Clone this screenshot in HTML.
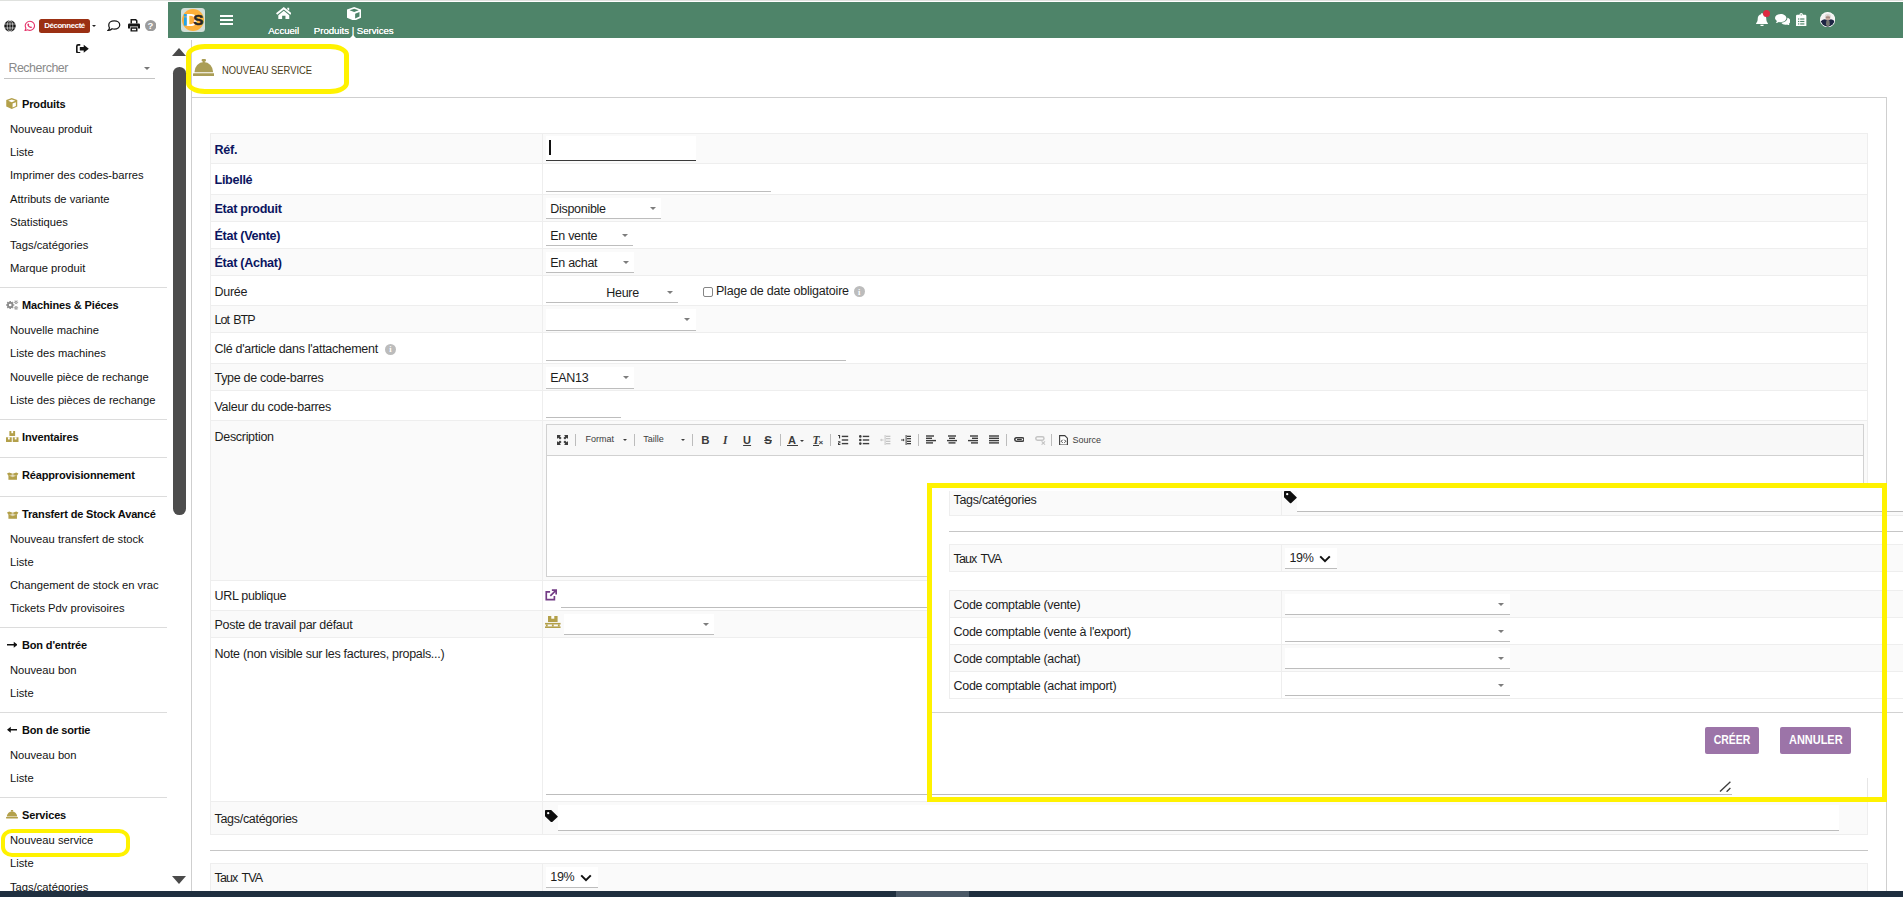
<!DOCTYPE html>
<html lang="fr"><head><meta charset="utf-8"><title>Nouveau service</title>
<style>
html,body{margin:0;padding:0;}
body{width:1903px;height:897px;overflow:hidden;background:#fff;position:relative;
 font-family:"Liberation Sans",sans-serif;color:#1b1b1b;}
div,span,svg{position:absolute;box-sizing:border-box;}
.t{white-space:nowrap;line-height:16px;height:16px;}
.s{font-size:11.2px;color:#121212;}
.sh{font-size:11px;font-weight:700;color:#0c0c0c;letter-spacing:-0.15px;}
.m{font-size:12.5px;color:#1d1d1d;letter-spacing:-0.3px;}
.mb{font-size:12.6px;font-weight:700;color:#0b1560;letter-spacing:-0.3px;}
.sep{left:0;width:167px;height:1px;background:#dcdcdc;}
.row{left:210px;width:1658px;border:1px solid #ececec;border-top:none;}
.g{background:#f8f8f8;}
.vs{left:542px;width:1px;background:#ececec;}
.ul{height:1px;background:#bdbdbd;}
.wb{background:#fff;}
.car{width:0;height:0;border-left:3px solid transparent;border-right:3px solid transparent;border-top:3px solid #6a6a6a;}
.btn{background:#9c74a8;border-radius:2px;color:#fff;font-weight:700;font-size:12.6px;line-height:26px;text-align:center;height:27px;}
.bt{position:relative;display:inline-block;}
</style></head>
<body>
<!-- left menu -->
<div id="side" style="left:0;top:0;width:168px;height:891px;overflow:hidden">
<svg style="left:3.5px;top:19.5px;" width="12" height="12" viewBox="0 0 24 24"><circle cx="12" cy="12" r="11.5" fill="#151515"/><g stroke="#fff" stroke-width="1.250" fill="none"><path d="M0 8H24M0 16H24M12 0V24"/><ellipse cx="12" cy="12" rx="5.6" ry="11.5"/></g></svg>
<svg style="left:24.3px;top:19.5px;" width="11.5" height="11.8" viewBox="0 0 24 24"><path fill="none" stroke="#e5346b" stroke-width="2.3" d="M12.4 2.2a9.6 9.6 0 1 1-4.9 17.9L2.2 21.8l1.8-5.1A9.6 9.6 0 0 1 12.4 2.2z"/><path fill="#e5346b" d="M8.4 7.2c.5-.5 1.1-.4 1.4.1l1 1.900c.2.4.1.8-.2 1.100l-.6.600c.7 1.400 1.700 2.400 3.100 3.100l.6-.6c.3-.3.700-.4 1.100-.2l1.900 1c.5.300.600.900.100 1.400-1.100 1.200-2.600 1.300-4.300.500-2.300-1.100-4-2.800-5.100-5.100-.8-1.700-.2-2.700 1-3.800z"/></svg>
<div style="left:39px;top:19px;width:51px;height:14px;background:#9b3013;border-radius:2.5px"></div>
<div class="t " style="left:39px;top:18.2px;width:51px;text-align:center;color:#fff;font-weight:700;font-size:7.9px;letter-spacing:-0.4px">Déconnecté</div>
<div style="left:92px;top:24.6px;width:0px;height:0px;border-left:2.3px solid transparent;border-right:2.3px solid transparent;border-top:2.3px solid #222"></div>
<svg style="left:107px;top:19.6px;" width="13.5" height="11.5" viewBox="0 0 27 23"><path fill="none" stroke="#1a1a1a" stroke-width="2.5" d="M14.500 1.800c6.200 0 11 3.700 11 8.200s-4.800 8.200-11 8.200c-1.500 0-3-.2-4.300-.7C8.300 19.300 5.600 20.600 2 21c1.700-1.700 2.700-3.400 3-5.200C3.800 14.100 3.500 12.100 3.500 10c0-4.500 4.800-8.200 11-8.200z"/></svg>
<svg style="left:128px;top:19.2px;" width="12" height="12.6" viewBox="0 0 24 25"><g fill="#161616"><path d="M5 0h11l3 3v6h-3V4.200l-1.200-1.200H8v6H5z"/><path d="M2.500 9h19A2.500 2.500 0 0 1 24 11.500V19h-4v-4H4v4H0v-7.500A2.500 2.500 0 0 1 2.500 9z"/><path d="M5 16.500h14V25H5zm3 2.800v2.900h8v-2.900z" fill-rule="evenodd"/></g></svg>
<svg style="left:144.6px;top:19.8px;" width="11.4" height="11.4" viewBox="0 0 24 24"><circle cx="12" cy="12" r="12" fill="#9b9b9b"/></svg>
<div class="t " style="left:144.6px;top:17.7px;width:11.4px;text-align:center;color:#fff;font-weight:700;font-size:9.5px">?</div>
<svg style="left:76px;top:43.8px;" width="12.8" height="9.6" viewBox="0 0 27 20"><g fill="#151515"><path d="M9 0H4.500A4.500 4.500 0 0 0 0 4.500v11A4.500 4.500 0 0 0 4.500 20H9v-3.400H5A1.600 1.600 0 0 1 3.400 15V5A1.600 1.600 0 0 1 5 3.400h4z"/><path d="M8 6.300h8.300V1.500L27 10l-10.700 8.500v-4.800H8z"/></g></svg>
<div class="t " style="left:8.4px;top:59.7px;font-size:12.4px;letter-spacing:-0.45px;color:#8a8a8a">Rechercher</div>
<div style="left:144px;top:67px;width:0px;height:0px;border-left:3px solid transparent;border-right:3px solid transparent;border-top:3px solid #777"></div>
<div style="left:4px;top:78px;width:151px;height:1px;background:#c4c4c4"></div>
<svg style="left:6.2px;top:98.3px;" width="11.5" height="11" viewBox="0 0 24 24"><path fill="#b3a04a" d="M12 0 L24 4.600 V18.800 L12 24 L0 18.800 V4.600 Z"/><path fill="#fff" d="M12 3 L19.800 6 L12 9.200 L4.200 6 Z"/><path fill="#fff" d="M13.800 12.200 L21 9.200 V17.200 L13.800 20.600 Z"/></svg>
<div class="t sh" style="left:22px;top:96px;">Produits</div>
<div class="t s" style="left:10px;top:121px;">Nouveau produit</div>
<div class="t s" style="left:10px;top:144px;">Liste</div>
<div class="t s" style="left:10px;top:167px;">Imprimer des codes-barres</div>
<div class="t s" style="left:10px;top:191px;">Attributs de variante</div>
<div class="t s" style="left:10px;top:214px;">Statistiques</div>
<div class="t s" style="left:10px;top:237px;">Tags/catégories</div>
<div class="t s" style="left:10px;top:260px;">Marque produit</div>
<div class="sep" style="left:0px;top:287px;width:167px;height:1px;"></div>
<svg style="left:6.3px;top:300.4px;overflow:visible" width="12.6" height="10" viewBox="0 0 12.600 10"><circle cx="4.2" cy="5.0" r="2.3" fill="none" stroke="#8c8c8c" stroke-width="1.9"/><path d="M7.25 5.00L8.25 5.00M6.36 7.16L7.06 7.86M4.20 8.05L4.20 9.05M2.04 7.16L1.34 7.86M1.15 5.00L0.15 5.00M2.04 2.84L1.34 2.14M4.20 1.95L4.20 0.95M6.36 2.84L7.06 2.14" stroke="#8c8c8c" stroke-width="1.5" fill="none"/><circle cx="10.1" cy="2.3" r="1.05" fill="none" stroke="#8c8c8c" stroke-width="1.0"/><path d="M11.45 2.30L12.15 2.30M10.78 3.47L11.12 4.08M9.43 3.47L9.07 4.08M8.75 2.30L8.05 2.30M9.42 1.13L9.07 0.52M10.78 1.13L11.12 0.52" stroke="#8c8c8c" stroke-width="0.9" fill="none"/><circle cx="10.1" cy="7.9" r="1.05" fill="none" stroke="#8c8c8c" stroke-width="1.0"/><path d="M11.45 7.90L12.15 7.90M10.78 9.07L11.12 9.68M9.43 9.07L9.07 9.68M8.75 7.90L8.05 7.90M9.42 6.73L9.07 6.12M10.78 6.73L11.12 6.12" stroke="#8c8c8c" stroke-width="0.9" fill="none"/></svg>
<div class="t sh" style="left:22px;top:297px;">Machines &amp; Piéces</div>
<div class="t s" style="left:10px;top:322px;">Nouvelle machine</div>
<div class="t s" style="left:10px;top:345px;">Liste des machines</div>
<div class="t s" style="left:10px;top:369px;">Nouvelle pièce de rechange</div>
<div class="t s" style="left:10px;top:392px;">Liste des pièces de rechange</div>
<div class="sep" style="left:0px;top:419px;width:167px;height:1px;"></div>
<svg style="left:6.2px;top:430.8px;" width="12.5" height="11.5" viewBox="0 0 24 22"><g fill="#b3a04a"><rect x="6.5" y="0" width="11" height="9.5"/><rect x="0" y="12" width="11" height="10"/><rect x="13" y="12" width="11" height="10"/></g><g fill="#fff"><rect x="10.3" y="0" width="3.4" height="4.2"/><rect x="3.8" y="12" width="3.4" height="4.2"/><rect x="16.8" y="12" width="3.4" height="4.2"/></g></svg>
<div class="t sh" style="left:22px;top:429px;">Inventaires</div>
<div class="sep" style="left:0px;top:457px;width:167px;height:1px;"></div>
<svg style="left:6.7px;top:471.7px;overflow:visible" width="11.4" height="8" preserveAspectRatio="none" viewBox="0 0 24 18"><g fill="#b3a04a"><path d="M3 7.5 H21 V17.5 H3 Z"/><path d="M0 3.2 L4.6 1 L12 4.2 L19.4 1 L24 3.2 L21 8.6 L12 5.4 L3 8.6 Z"/></g><path fill="#fff" d="M6 9.2 L12 7 L18 9.2 L12 11.6 Z" opacity=".55"/></svg>
<div class="t sh" style="left:22px;top:467px;">Réapprovisionnement</div>
<div class="sep" style="left:0px;top:496px;width:167px;height:1px;"></div>
<svg style="left:6.7px;top:510.7px;overflow:visible" width="11.4" height="8" preserveAspectRatio="none" viewBox="0 0 24 18"><g fill="#b3a04a"><path d="M3 7.5 H21 V17.5 H3 Z"/><path d="M0 3.2 L4.6 1 L12 4.2 L19.4 1 L24 3.2 L21 8.6 L12 5.4 L3 8.6 Z"/></g><path fill="#fff" d="M6 9.2 L12 7 L18 9.2 L12 11.6 Z" opacity=".55"/></svg>
<div class="t sh" style="left:22px;top:506px;">Transfert de Stock Avancé</div>
<div class="t s" style="left:10px;top:531px;">Nouveau transfert de stock</div>
<div class="t s" style="left:10px;top:554px;">Liste</div>
<div class="t s" style="left:10px;top:577px;">Changement de stock en vrac</div>
<div class="t s" style="left:10px;top:600px;">Tickets Pdv provisoires</div>
<div class="sep" style="left:0px;top:627px;width:167px;height:1px;"></div>
<svg style="left:6.6px;top:641.4px;" width="10.5" height="7.5" viewBox="0 0 14 10"><path fill="#111" d="M0 4 H9 V1 L14 5 L9 9 V6 H0 Z"/></svg>
<div class="t sh" style="left:22px;top:637px;">Bon d'entrée</div>
<div class="t s" style="left:10px;top:662px;">Nouveau bon</div>
<div class="t s" style="left:10px;top:685px;">Liste</div>
<div class="sep" style="left:0px;top:712px;width:167px;height:1px;"></div>
<svg style="left:6.6px;top:726.4px;" width="10.5" height="7.5" viewBox="0 0 14 10"><path fill="#111" d="M14 4 H5 V1 L0 5 L5 9 V6 H14 Z"/></svg>
<div class="t sh" style="left:22px;top:722px;">Bon de sortie</div>
<div class="t s" style="left:10px;top:747px;">Nouveau bon</div>
<div class="t s" style="left:10px;top:770px;">Liste</div>
<div class="sep" style="left:0px;top:797px;width:167px;height:1px;"></div>
<svg style="left:6px;top:810.2px;" width="12" height="8.5" preserveAspectRatio="none" viewBox="0 0 24 16"><g fill="#b3a04a"><rect x="0" y="13.2" width="24" height="2.8" rx=".8"/><path d="M1.6 12.4 A10.4 9.6 0 0 1 22.4 12.4 Z"/><rect x="9.6" y="0" width="4.8" height="2.4" rx="1"/><rect x="11" y="1.5" width="2" height="2.2"/></g></svg>
<div class="t sh" style="left:22px;top:807px;">Services</div>
<div class="t s" style="left:10px;top:832px;">Nouveau service</div>
<div class="t s" style="left:10px;top:855px;">Liste</div>
<div class="t s" style="left:10px;top:879px;">Tags/catégories</div>
<div style="left:1px;top:829px;width:128.8px;height:27.8px;border:4.8px solid #fff200;border-radius:11px/10px"></div>
</div>
<!-- top strip + green menu bar -->
<div style="left:0px;top:0px;width:1903px;height:1px;background:#dfe1de"></div>
<div style="left:168px;top:2px;width:1735px;height:36px;background:#4e8469"></div>
<div style="left:181px;top:8px;width:24px;height:24px;background:#d3dfd8;border-radius:3.5px"></div>
<div style="left:181.8px;top:8.8px;width:22.4px;height:22.4px;background:#fdb03a;border-radius:50%"></div>
<svg style="left:181px;top:8px;" width="24" height="24" viewBox="0 0 24 24"><rect x="2.900" y="6" width="2.900" height="2.500" fill="#1ea4ea"/><rect x="2.900" y="9.300" width="2.900" height="8.300" fill="#1ea4ea"/><text x="4.900" y="17.500" font-family="Liberation Sans, sans-serif" font-weight="700" font-size="16" fill="#fff">D</text><text x="12.200" y="17.450" font-family="Liberation Sans, sans-serif" font-weight="700" font-size="15.200" fill="#272727" stroke="#272727" stroke-width=".500">S</text></svg>
<div style="left:220.3px;top:15px;width:12.8px;height:2.1px;background:#fff"></div>
<div style="left:220.3px;top:19px;width:12.8px;height:2.1px;background:#fff"></div>
<div style="left:220.3px;top:23px;width:12.8px;height:2.1px;background:#fff"></div>
<svg style="left:275.6px;top:6.6px;" width="15.6" height="12.6" viewBox="0 0 31 25"><g fill="#fff"><path d="M15.500 0 L31 12.600 L28.600 15.600 L15.500 4.900 L2.400 15.600 L0 12.600 Z"/><path d="M15.500 7.300 L26.400 16.200 V25 H18.800 V17.600 H12.200 V25 H4.600 V16.200 Z"/><path d="M22.400 1.400 H26.200 V7.600 L22.400 4.500 Z"/></g></svg>
<div class="t " style="left:268.2px;top:23.4px;color:#fff;font-size:9.7px;letter-spacing:-0.05px;text-shadow:0 0 .6px #fff">Accueil</div>
<svg style="left:346.9px;top:6.6px;" width="14.4" height="13.8" preserveAspectRatio="none" viewBox="0 0 24 24"><path fill="#fff" d="M12 0 L24 4.400 V18.600 L12 24 L0 18.600 V4.400 Z"/><path fill="#4e8469" d="M12 3 L19.600 5.800 L12 8.800 L4.400 5.800 Z"/><path fill="#4e8469" d="M13.600 11.600 L20.800 8.800 V16.600 L13.600 20 Z"/></svg>
<div class="t " style="left:313.8px;top:23.4px;color:#fff;font-size:9.7px;letter-spacing:-0.04px;text-shadow:0 0 .6px #fff">Produits | Services</div>
<div style="left:350.3px;top:34.8px;width:0px;height:0px;border-left:3.4px solid transparent;border-right:3.4px solid transparent;border-bottom:3.4px solid #fff"></div>
<svg style="left:1756.4px;top:12.8px;" width="12" height="13.4" viewBox="0 0 24 27"><g fill="#fff"><path d="M12 0c1 0 1.800.8 1.800 1.800v.9c4 .8 6.800 4.200 6.800 8.300 0 4.800 1.200 7.200 3 9 .8.800.3 2.300-1 2.300H1.400c-1.300 0-1.800-1.500-1-2.300 1.800-1.800 3-4.200 3-9 0-4.100 2.800-7.500 6.800-8.300v-.9C10.200.8 11 0 12 0z"/><path d="M8.600 23.600h6.800a3.400 3.400 0 0 1-6.800 0z"/></g></svg>
<div style="left:1762.9px;top:9.8px;width:7.2px;height:7.2px;background:#df2a41;border-radius:50%"></div>
<svg style="left:1775px;top:14px;" width="15.4" height="11.4" viewBox="0 0 31 23"><g fill="#fff"><path d="M11.500 0C17.800 0 23 3.700 23 8.300s-5.200 8.300-11.500 8.300c-1.300 0-2.600-.2-3.800-.5-1.700 1.300-3.900 2-6.200 2 1.200-1.200 2-2.600 2.300-4.100C1.500 12.500 0 10.500 0 8.300 0 3.700 5.200 0 11.500 0z"/><path d="M25 8.800c3.500 1.200 6 3.700 6 6.700 0 2-1.200 3.800-3 5.100.3 1.300 1 2.400 2 3.400-2.100 0-4-.6-5.500-1.700-1.100.3-2.300.4-3.500.4-3.700 0-6.900-1.600-8.500-4 7-.2 12.500-4.400 12.500-9.900z" transform="translate(0,-1)"/></g></svg>
<svg style="left:1796.4px;top:12.6px;" width="10.4" height="13.8" viewBox="0 0 21 28"><g fill="#fff"><path d="M2.500 3.500H7a3.500 3.500 0 0 1 7 0h4.500A2.500 2.500 0 0 1 21 6v19.500a2.500 2.500 0 0 1-2.500 2.500h-16A2.500 2.500 0 0 1 0 25.500V6a2.500 2.500 0 0 1 2.500-2.500z"/></g><g fill="#4e8469"><circle cx="10.500" cy="3.700" r="1.300"/><rect x="4" y="11" width="2.600" height="2.400"/><rect x="8.400" y="11" width="8.600" height="2.400"/><rect x="4" y="16" width="2.600" height="2.400"/><rect x="8.400" y="16" width="8.600" height="2.400"/><rect x="4" y="21" width="2.600" height="2.400"/><rect x="8.400" y="21" width="8.600" height="2.400"/></g></svg>
<svg style="left:1819.9px;top:12px;" width="15.3" height="15.3" viewBox="0 0 32 32"><defs><clipPath id="av"><circle cx="16" cy="16" r="14.600"/></clipPath></defs><circle cx="16" cy="16" r="16" fill="#fff"/><g clip-path="url(#av)"><rect width="32" height="32" fill="#f4f3f3"/><ellipse cx="16.500" cy="9.500" rx="6.400" ry="5.600" fill="#dcdad8"/><ellipse cx="16.500" cy="12.800" rx="4.800" ry="5.400" fill="#c4a79c"/><rect x="12.300" y="10.200" width="8.400" height="1.500" fill="#6d5f5c" opacity=".7"/><path d="M0 32V22c3-4.500 7-6.200 10.500-6.600l6 3 6-3c3.500 .4 7.500 2.100 9.500 6.600v10z" fill="#1c2442"/><path d="M13.300 17.600h6.400l1 8.400-4.200 6-4.200-6z" fill="#74746f"/></g></svg>
<div style="left:191px;top:40px;width:1px;height:851px;background:#cfcfcf"></div>
<div style="left:191px;top:97px;width:1696px;height:1px;background:#cfcfcf"></div>
<div style="left:1886px;top:97px;width:1px;height:794px;background:#cfcfcf;border-radius:0"></div>
<svg style="left:192.7px;top:58.9px;" width="21.6" height="17.2" preserveAspectRatio="none" viewBox="0 0 24 16"><g fill="#aa9d55"><rect x="0" y="13.2" width="24" height="2.8" rx=".8"/><path d="M1.6 12.4 A10.4 9.6 0 0 1 22.4 12.4 Z"/><rect x="9.6" y="0" width="4.8" height="2.4" rx="1"/><rect x="11" y="1.5" width="2" height="2.2"/></g></svg>
<div class="t " style="left:221.6px;top:61.900000000000006px;font-size:11.6px;color:#4a3d17;transform:scaleX(.81);transform-origin:0 50%">NOUVEAU SERVICE</div>
<div style="left:186.4px;top:43.8px;width:163px;height:50.2px;border:5px solid #fff200;border-radius:19px/11px"></div>
<div style="left:171.9px;top:47.8px;width:0px;height:0px;border-left:7.6px solid transparent;border-right:7.6px solid transparent;border-bottom:8px solid #4a4a4a"></div>
<div style="left:173.2px;top:66.8px;width:12.7px;height:448.2px;background:#4d4d4d;border-radius:6.350px"></div>
<div style="left:172px;top:876.2px;width:0px;height:0px;border-left:7.600px solid transparent;border-right:7.600px solid transparent;border-top:8px solid #4a4a4a"></div>
<div style="left:0px;top:891px;width:1903px;height:6px;background:#1f2f3f;z-index:9"></div>
<div style="left:896px;top:891px;width:73px;height:6px;background:#4a5866;z-index:9"></div>
<!-- main form -->
<div style="left:210px;top:133px;width:1658px;height:31px;background:#fafafa;border:1px solid #eeeeee"></div>
<div style="left:542px;top:133px;width:1px;height:31px;background:#eeeeee"></div>
<div style="left:210px;top:163px;width:1658px;height:32px;background:#fff;border:1px solid #eeeeee"></div>
<div style="left:542px;top:163px;width:1px;height:32px;background:#eeeeee"></div>
<div style="left:210px;top:194px;width:1658px;height:28px;background:#fafafa;border:1px solid #eeeeee"></div>
<div style="left:542px;top:194px;width:1px;height:28px;background:#eeeeee"></div>
<div style="left:210px;top:221px;width:1658px;height:28px;background:#fff;border:1px solid #eeeeee"></div>
<div style="left:542px;top:221px;width:1px;height:28px;background:#eeeeee"></div>
<div style="left:210px;top:248px;width:1658px;height:28px;background:#fafafa;border:1px solid #eeeeee"></div>
<div style="left:542px;top:248px;width:1px;height:28px;background:#eeeeee"></div>
<div style="left:210px;top:275px;width:1658px;height:31px;background:#fff;border:1px solid #eeeeee"></div>
<div style="left:542px;top:275px;width:1px;height:31px;background:#eeeeee"></div>
<div style="left:210px;top:305px;width:1658px;height:28px;background:#fafafa;border:1px solid #eeeeee"></div>
<div style="left:542px;top:305px;width:1px;height:28px;background:#eeeeee"></div>
<div style="left:210px;top:332px;width:1658px;height:32px;background:#fff;border:1px solid #eeeeee"></div>
<div style="left:542px;top:332px;width:1px;height:32px;background:#eeeeee"></div>
<div style="left:210px;top:363px;width:1658px;height:28px;background:#fafafa;border:1px solid #eeeeee"></div>
<div style="left:542px;top:363px;width:1px;height:28px;background:#eeeeee"></div>
<div style="left:210px;top:390px;width:1658px;height:31px;background:#fff;border:1px solid #eeeeee"></div>
<div style="left:542px;top:390px;width:1px;height:31px;background:#eeeeee"></div>
<div style="left:210px;top:420px;width:1658px;height:161px;background:#fafafa;border:1px solid #eeeeee"></div>
<div style="left:542px;top:420px;width:1px;height:161px;background:#eeeeee"></div>
<div style="left:210px;top:580px;width:1658px;height:31px;background:#fff;border:1px solid #eeeeee"></div>
<div style="left:542px;top:580px;width:1px;height:31px;background:#eeeeee"></div>
<div style="left:210px;top:610px;width:1658px;height:28px;background:#fafafa;border:1px solid #eeeeee"></div>
<div style="left:542px;top:610px;width:1px;height:28px;background:#eeeeee"></div>
<div style="left:210px;top:637px;width:1658px;height:165px;background:#fff;border:1px solid #eeeeee"></div>
<div style="left:542px;top:637px;width:1px;height:165px;background:#eeeeee"></div>
<div style="left:210px;top:801px;width:1658px;height:34px;background:#fafafa;border:1px solid #eeeeee"></div>
<div style="left:542px;top:801px;width:1px;height:34px;background:#eeeeee"></div>
<div style="left:210px;top:850px;width:1658px;height:1px;background:#c6c6c6"></div>
<div style="left:210px;top:863px;width:1658px;height:33px;background:#fafafa;border:1px solid #eeeeee"></div>
<div style="left:542px;top:863px;width:1px;height:33px;background:#eeeeee"></div>
<div class="t mb" style="left:214.5px;top:141.7px;">Réf.</div>
<div class="t mb" style="left:214.5px;top:171.7px;">Libellé</div>
<div class="t mb" style="left:214.5px;top:201px;">Etat produit</div>
<div class="t mb" style="left:214.5px;top:228px;">État (Vente)</div>
<div class="t mb" style="left:214.5px;top:255px;">État (Achat)</div>
<div class="t m" style="left:214.5px;top:284.3px;">Durée</div>
<div class="t m" style="left:214.5px;top:312.3px;letter-spacing:-0.95px;word-spacing:1.600px">Lot BTP</div>
<div class="t m" style="left:214.5px;top:341.1px;">Clé d'article dans l'attachement</div>
<div class="t m" style="left:214.5px;top:370.3px;">Type de code-barres</div>
<div class="t m" style="left:214.5px;top:399.3px;">Valeur du code-barres</div>
<div class="t m" style="left:214.5px;top:429.3px;">Description</div>
<div class="t m" style="left:214.5px;top:588.3px;">URL publique</div>
<div class="t m" style="left:214.5px;top:617.3px;">Poste de travail par défaut</div>
<div class="t m" style="left:214.5px;top:646.3px;">Note (non visible sur les factures, propals...)</div>
<div class="t m" style="left:214.5px;top:811.3px;">Tags/catégories</div>
<div class="t m" style="left:214.5px;top:870.3px;letter-spacing:-0.85px;word-spacing:1.600px">Taux TVA</div>
<div style="left:546px;top:136px;width:150px;height:24px;background:#fff"></div>
<div style="left:546px;top:160px;width:150px;height:1px;background:#3a3a3a"></div>
<div style="left:549px;top:140px;width:1.6px;height:15px;background:#111"></div>
<div class="ul" style="left:546px;top:191px;width:225px;height:1px;"></div>
<div style="left:546px;top:198px;width:115px;height:20px;background:#fff"></div>
<div style="left:546px;top:218px;width:115px;height:1px;background:#bdbdbd"></div>
<div class="t m" style="left:550.3px;top:201.20000000000002px;">Disponible</div>
<div style="left:650px;top:206.9px;width:0px;height:0px;border-left:3px solid transparent;border-right:3px solid transparent;border-top:3px solid #7d7d7d"></div>
<div style="left:546px;top:225px;width:87px;height:20px;background:#fff"></div>
<div style="left:546px;top:245px;width:87px;height:1px;background:#bdbdbd"></div>
<div class="t m" style="left:550.3px;top:228.20000000000002px;">En vente</div>
<div style="left:622px;top:233.9px;width:0px;height:0px;border-left:3px solid transparent;border-right:3px solid transparent;border-top:3px solid #7d7d7d"></div>
<div style="left:546px;top:252px;width:88px;height:20px;background:#fff"></div>
<div style="left:546px;top:272px;width:88px;height:1px;background:#bdbdbd"></div>
<div class="t m" style="left:550.3px;top:255.2px;">En achat</div>
<div style="left:623px;top:260.9px;width:0px;height:0px;border-left:3px solid transparent;border-right:3px solid transparent;border-top:3px solid #7d7d7d"></div>
<div class="ul" style="left:546px;top:302px;width:132px;height:1px;"></div>
<div class="t m" style="left:606.3px;top:285.2px;">Heure</div>
<div style="left:666.8px;top:291.4px;width:0px;height:0px;border-left:3px solid transparent;border-right:3px solid transparent;border-top:3px solid #7d7d7d"></div>
<div style="left:703.3px;top:287.2px;width:9.6px;height:9.6px;background:#fff;border:1px solid #858585;border-radius:2px"></div>
<div class="t m" style="left:716px;top:283.0px;letter-spacing:-0.22px">Plage de date obligatoire</div>
<div style="left:853.8px;top:286.1px;width:11px;height:11px;background:#bcbcbc;border-radius:50%"></div>
<div class="t " style="left:853.8px;top:283.8px;width:11px;text-align:center;color:#fff;font-weight:700;font-size:8.5px;font-family:'Liberation Serif',serif">i</div>
<div style="left:546px;top:309px;width:150px;height:20.5px;background:#fff"></div>
<div style="left:546px;top:329.5px;width:150px;height:1px;background:#bdbdbd"></div>
<div style="left:684px;top:317.9px;width:0px;height:0px;border-left:3px solid transparent;border-right:3px solid transparent;border-top:3px solid #7d7d7d"></div>
<div style="left:385.0px;top:343.7px;width:11px;height:11px;background:#bcbcbc;border-radius:50%"></div>
<div class="t " style="left:385.0px;top:341.4px;width:11px;text-align:center;color:#fff;font-weight:700;font-size:8.5px;font-family:'Liberation Serif',serif">i</div>
<div class="ul" style="left:546px;top:360px;width:300px;height:1px;"></div>
<div style="left:546px;top:367px;width:88px;height:20.5px;background:#fff"></div>
<div style="left:546px;top:387.5px;width:88px;height:1px;background:#bdbdbd"></div>
<div class="t m" style="left:550.3px;top:370.2px;">EAN13</div>
<div style="left:623px;top:375.9px;width:0px;height:0px;border-left:3px solid transparent;border-right:3px solid transparent;border-top:3px solid #7d7d7d"></div>
<div class="ul" style="left:546px;top:417px;width:75px;height:1px;"></div>
<div style="left:546px;top:424px;width:1318px;height:153px;background:#fff;border:1px solid #d1d1d1"></div>
<div style="left:547px;top:425px;width:1316px;height:30px;background:#f8f8f8;border-bottom:1px solid #d1d1d1;height:31px"></div>
<svg style="left:557.4px;top:435px;" width="11" height="10" viewBox="0 0 11 10"><g fill="#3c3c3c"><path d="M0 0H4L2.800 1.200 4.600 3 3 4.600 1.200 2.800 0 4Z"/><path d="M11 0V4L9.800 2.800 8 4.600 6.400 3 8.200 1.200 7 0Z"/><path d="M0 10V6L1.200 7.200 3 5.400 4.600 7 2.800 8.800 4 10Z"/><path d="M11 10H7L8.200 8.800 6.400 7 8 5.400 9.800 7.200 11 6Z"/></g></svg>
<div style="left:574.9px;top:433.5px;width:1px;height:12.5px;background:#bcbcbc"></div>
<div class="t " style="left:585.4px;top:431.3px;font-size:9px;color:#3c3c3c">Format</div>
<div style="left:622.6px;top:439.3px;width:0px;height:0px;border-left:2.2px solid transparent;border-right:2.2px solid transparent;border-top:2.2px solid #3c3c3c"></div>
<div style="left:634.0px;top:433.5px;width:1px;height:12.5px;background:#bcbcbc"></div>
<div class="t " style="left:643.2px;top:431.3px;font-size:9px;color:#3c3c3c">Taille</div>
<div style="left:680.5px;top:439.3px;width:0px;height:0px;border-left:2.2px solid transparent;border-right:2.2px solid transparent;border-top:2.2px solid #3c3c3c"></div>
<div style="left:691.9px;top:433.5px;width:1px;height:12.5px;background:#bcbcbc"></div>
<div class="t " style="left:700.3px;top:432.3px;width:10px;text-align:center;font-size:11.5px;font-weight:700;color:#3c3c3c">B</div>
<div class="t " style="left:720.3px;top:432.3px;width:10px;text-align:center;font-size:11.5px;font-weight:700;font-style:italic;font-family:'Liberation Serif',serif;color:#3c3c3c">I</div>
<div class="t " style="left:742.1px;top:432.3px;width:10px;text-align:center;font-size:11px;font-weight:700;color:#3c3c3c;text-decoration:underline">U</div>
<div class="t " style="left:763px;top:432.3px;width:10px;text-align:center;font-size:11.5px;font-weight:700;color:#3c3c3c;text-decoration:line-through">S</div>
<div style="left:780.0px;top:433.5px;width:1px;height:12.5px;background:#bcbcbc"></div>
<div class="t " style="left:787px;top:431.6px;width:10px;text-align:center;font-size:11px;font-weight:700;color:#3c3c3c">A</div>
<div style="left:787px;top:445.2px;width:10.6px;height:1.3px;background:#3c3c3c"></div>
<div style="left:800px;top:439.6px;width:0px;height:0px;border-left:2px solid transparent;border-right:2px solid transparent;border-top:2px solid #3c3c3c"></div>
<div class="t " style="left:812.6px;top:431.8px;font-size:11.5px;font-weight:700;font-style:italic;font-family:'Liberation Serif',serif;color:#3c3c3c">T</div>
<div class="t " style="left:818.4px;top:435px;font-size:8px;font-weight:700;color:#3c3c3c">×</div>
<div style="left:812.8px;top:445.4px;width:6px;height:1px;background:#3c3c3c"></div>
<div style="left:829.9px;top:433.5px;width:1px;height:12.5px;background:#bcbcbc"></div>
<svg style="left:838.2px;top:435px;" width="10.4" height="10" viewBox="0 0 10.400 10"><g fill="#3c3c3c"><rect x="3.800" y=".700" width="6.400" height="1.400"/><rect x="3.800" y="4.300" width="6.400" height="1.400"/><rect x="3.800" y="7.900" width="6.400" height="1.400"/><rect x="1" y="0" width="1.100" height="3.400"/><rect x="0" y="0" width="2" height=".900"/><path d="M0 6.200H2.400V8.200H1V9H2.400V10H0V7.600H1.400V7.100H0Z"/></g></svg>
<svg style="left:859.2px;top:435px;" width="10.4" height="10" viewBox="0 0 10.400 10"><g fill="#3c3c3c"><rect x="3.800" y=".700" width="6.400" height="1.400"/><rect x="3.800" y="4.300" width="6.400" height="1.400"/><rect x="3.800" y="7.900" width="6.400" height="1.400"/><circle cx="1.300" cy="1.400" r="1.300"/><circle cx="1.300" cy="8.600" r="1.300"/><circle cx="1.300" cy="5" r="1.300"/></g></svg>
<svg style="left:880.2px;top:435px;" width="10.4" height="10" viewBox="0 0 10.400 10"><g fill="#c4c4c4"><rect x="4.600" y="0" width="1" height="10"/><rect x="6" y=".700" width="4.400" height="1.300"/><rect x="6" y="3" width="4.400" height="1.300"/><rect x="6" y="5.700" width="4.400" height="1.300"/><rect x="6" y="8" width="4.400" height="1.300"/><path d="M3.600 4.400H1.600V3.400L0 5 1.600 6.600V5.600H3.600Z"/></g></svg>
<svg style="left:901px;top:435px;" width="10.4" height="10" viewBox="0 0 10.400 10"><g fill="#3c3c3c"><rect x="4.600" y="0" width="1" height="10"/><rect x="6" y=".700" width="4.400" height="1.300"/><rect x="6" y="3" width="4.400" height="1.300"/><rect x="6" y="5.700" width="4.400" height="1.300"/><rect x="6" y="8" width="4.400" height="1.300"/><path d="M0 4.400H2V3.400L3.600 5 2 6.600V5.600H0Z"/></g></svg>
<div style="left:917.9px;top:433.5px;width:1px;height:12.5px;background:#bcbcbc"></div>
<svg style="left:926px;top:435.2px;" width="10" height="9.6" viewBox="0 0 10 9.600"><g fill="#3c3c3c"><rect x="0" y="0.3" width="8" height="1.400"/><rect x="0" y="2.5999999999999996" width="6" height="1.400"/><rect x="0" y="4.8999999999999995" width="10" height="1.400"/><rect x="0" y="7.199999999999999" width="7" height="1.400"/></g></svg>
<svg style="left:947px;top:435.2px;" width="10" height="9.6" viewBox="0 0 10 9.600"><g fill="#3c3c3c"><rect x="1.0" y="0.3" width="8" height="1.400"/><rect x="2.0" y="2.5999999999999996" width="6" height="1.400"/><rect x="0.0" y="4.8999999999999995" width="10" height="1.400"/><rect x="1.5" y="7.199999999999999" width="7" height="1.400"/></g></svg>
<svg style="left:968px;top:435.2px;" width="10" height="9.6" viewBox="0 0 10 9.600"><g fill="#3c3c3c"><rect x="2" y="0.3" width="8" height="1.400"/><rect x="4" y="2.5999999999999996" width="6" height="1.400"/><rect x="0" y="4.8999999999999995" width="10" height="1.400"/><rect x="3" y="7.199999999999999" width="7" height="1.400"/></g></svg>
<svg style="left:989px;top:435.2px;" width="10" height="9.6" viewBox="0 0 10 9.600"><g fill="#3c3c3c"><rect x="0" y="0.3" width="10" height="1.400"/><rect x="0" y="2.5999999999999996" width="10" height="1.400"/><rect x="0" y="4.8999999999999995" width="10" height="1.400"/><rect x="0" y="7.199999999999999" width="10" height="1.400"/></g></svg>
<div style="left:1006.0px;top:433.5px;width:1px;height:12.5px;background:#bcbcbc"></div>
<svg style="left:1013.6px;top:437.2px;" width="10.8" height="5" viewBox="0 0 10.800 5"><rect x=".800" y=".800" width="9.200" height="3.400" rx="1.700" fill="none" stroke="#3c3c3c" stroke-width="1.600"/><rect x="3" y="1.900" width="4.800" height="1.200" fill="#3c3c3c"/></svg>
<svg style="left:1035px;top:436.4px;" width="10.8" height="9" viewBox="0 0 10.800 9"><rect x=".800" y=".800" width="8.200" height="3.400" rx="1.700" fill="none" stroke="#c4c4c4" stroke-width="1.500"/><path d="M6.600 5.400L10 8.600M10 5.400L6.600 8.600" stroke="#c4c4c4" stroke-width="1.200"/></svg>
<div style="left:1050.8px;top:433.5px;width:1px;height:12.5px;background:#bcbcbc"></div>
<svg style="left:1059px;top:434.8px;" width="9" height="10.6" viewBox="0 0 9 10.600"><path d="M.600 .600H5.800L8.400 3.200V10H.600Z" fill="#fff" stroke="#3c3c3c" stroke-width="1.100"/><path d="M3.600 4.800L2.200 6.300 3.600 7.800M5.400 4.800L6.800 6.300 5.400 7.800" fill="none" stroke="#3c3c3c" stroke-width="1"/></svg>
<div class="t " style="left:1072.6px;top:431.8px;font-size:9px;color:#3c3c3c">Source</div>
<svg style="left:545.2px;top:589.2px;" width="12.2" height="12.2" viewBox="0 0 24 24"><g fill="none" stroke="#733c85" stroke-width="3.300"><path d="M18.500 14v7H2.500V5.500H10"/><path d="M13.500 2.200H22V10.700M21.500 2.700L10.500 13.700"/></g></svg>
<div class="ul" style="left:561px;top:607px;width:1279px;height:1px;"></div>
<svg style="left:545px;top:616.4px;" width="15.6" height="12" viewBox="0 0 26 20"><g fill="#b3a04a"><rect x="5" y="0" width="16" height="10"/><rect x="0" y="11.500" width="26" height="2.600"/><rect x="0" y="17.400" width="26" height="2.600"/><rect x="1.500" y="14" width="3" height="3.500"/><rect x="11.500" y="14" width="3" height="3.500"/><rect x="21.500" y="14" width="3" height="3.500"/></g><rect x="10.500" y="0" width="5" height="4.500" fill="#fff"/></svg>
<div style="left:564px;top:614px;width:150px;height:20px;background:#fff"></div>
<div style="left:564px;top:634px;width:150px;height:1px;background:#bdbdbd"></div>
<div style="left:703px;top:623.2px;width:0px;height:0px;border-left:3px solid transparent;border-right:3px solid transparent;border-top:3px solid #7d7d7d"></div>
<div class="ul" style="left:546px;top:794px;width:1186px;height:1px;"></div>
<svg style="left:545.1px;top:810px;" width="12.8" height="12.4" viewBox="0 0 12.800 12.400"><path fill="#0d0d0d" d="M.800 0H6.200L12.600 6.300a.600 .600 0 0 1 0 .800L7 12.200a.600 .600 0 0 1-.800 0L0 6.200V.800A.800 .800 0 0 1 .800 0z"/><circle cx="3.200" cy="3.200" r="1.150" fill="#fff"/></svg>
<div style="left:558px;top:805px;width:1281px;height:25px;background:#fff"></div>
<div class="ul" style="left:558px;top:830px;width:1281px;height:1px;"></div>
<div style="left:546px;top:867px;width:52px;height:20px;background:#fff"></div>
<div class="ul" style="left:546px;top:887px;width:52px;height:1px;"></div>
<div class="t m" style="left:550.3px;top:869px;">19%</div>
<svg style="left:580.4px;top:873.8px;" width="12" height="8" viewBox="0 0 12 8"><path d="M1.200 1.400 L6 6.200 L10.800 1.400" fill="none" stroke="#111" stroke-width="2"/></svg>
<!-- pasted zoom panel with yellow frame -->
<div id="inset" style="left:927px;top:483px;width:976px;height:318.6px;background:#fff;overflow:hidden">
<div style="left:22px;top:-3px;width:960px;height:36px;background:#fafafa;border:1px solid #eeeeee"></div>
<div style="left:354px;top:-3px;width:1px;height:36px;background:#eeeeee"></div>
<div style="left:0px;top:0px;width:976px;height:7.6px;background:#fff"></div>
<div style="left:936px;top:0px;width:1px;height:7.6px;background:#d1d1d1"></div>
<div style="left:937px;top:0px;width:3px;height:7.6px;background:#fafafa"></div>
<div style="left:940px;top:0px;width:1px;height:7.6px;background:#e4e4e4"></div>
<div class="t m" style="left:26.5px;top:9.300000000000011px;">Tags/catégories</div>
<svg style="left:357.1px;top:8.2px;" width="12.8" height="12.4" viewBox="0 0 12.800 12.400"><path fill="#0d0d0d" d="M.800 0H6.200L12.600 6.300a.600 .600 0 0 1 0 .800L7 12.200a.600 .600 0 0 1-.800 0L0 6.200V.800A.800 .800 0 0 1 .800 0z"/><circle cx="3.200" cy="3.200" r="1.150" fill="#fff"/></svg>
<div style="left:370px;top:3px;width:700px;height:25px;background:#fff"></div>
<div class="ul" style="left:370px;top:28px;width:700px;height:1px;"></div>
<div style="left:22px;top:48px;width:960px;height:1px;background:#c6c6c6"></div>
<div style="left:22px;top:61px;width:960px;height:28px;background:#fafafa;border:1px solid #eeeeee"></div>
<div style="left:354px;top:61px;width:1px;height:28px;background:#eeeeee"></div>
<div class="t m" style="left:26.5px;top:68.29999999999995px;letter-spacing:-0.85px;word-spacing:1.600px">Taux TVA</div>
<div style="left:358px;top:65px;width:52px;height:20px;background:#fff"></div>
<div class="ul" style="left:358px;top:85px;width:52px;height:1px;"></div>
<div class="t m" style="left:362.4000000000001px;top:67.20000000000005px;">19%</div>
<svg style="left:392.4px;top:71.8px;" width="12" height="8" viewBox="0 0 12 8"><path d="M1.200 1.400 L6 6.200 L10.800 1.400" fill="none" stroke="#111" stroke-width="2"/></svg>
<div style="left:22px;top:107px;width:960px;height:28px;background:#fafafa;border:1px solid #eeeeee"></div>
<div style="left:354px;top:107px;width:1px;height:28px;background:#eeeeee"></div>
<div class="t m" style="left:26.5px;top:114px;">Code comptable (vente)</div>
<div style="left:358px;top:111px;width:225px;height:20px;background:#fff"></div>
<div style="left:358px;top:131px;width:225px;height:1px;background:#bdbdbd"></div>
<div style="left:571px;top:120.1px;width:0px;height:0px;border-left:3px solid transparent;border-right:3px solid transparent;border-top:3px solid #7d7d7d"></div>
<div style="left:22px;top:134px;width:960px;height:28px;background:#fff;border:1px solid #eeeeee"></div>
<div style="left:354px;top:134px;width:1px;height:28px;background:#eeeeee"></div>
<div class="t m" style="left:26.5px;top:141px;">Code comptable (vente à l'export)</div>
<div style="left:358px;top:138px;width:225px;height:20px;background:#fff"></div>
<div style="left:358px;top:158px;width:225px;height:1px;background:#bdbdbd"></div>
<div style="left:571px;top:147.1px;width:0px;height:0px;border-left:3px solid transparent;border-right:3px solid transparent;border-top:3px solid #7d7d7d"></div>
<div style="left:22px;top:161px;width:960px;height:28px;background:#fafafa;border:1px solid #eeeeee"></div>
<div style="left:354px;top:161px;width:1px;height:28px;background:#eeeeee"></div>
<div class="t m" style="left:26.5px;top:168px;">Code comptable (achat)</div>
<div style="left:358px;top:165px;width:225px;height:20px;background:#fff"></div>
<div style="left:358px;top:185px;width:225px;height:1px;background:#bdbdbd"></div>
<div style="left:571px;top:174.1px;width:0px;height:0px;border-left:3px solid transparent;border-right:3px solid transparent;border-top:3px solid #7d7d7d"></div>
<div style="left:22px;top:188px;width:960px;height:28px;background:#fff;border:1px solid #eeeeee"></div>
<div style="left:354px;top:188px;width:1px;height:28px;background:#eeeeee"></div>
<div class="t m" style="left:26.5px;top:195px;">Code comptable (achat import)</div>
<div style="left:358px;top:192px;width:225px;height:20px;background:#fff"></div>
<div style="left:358px;top:212px;width:225px;height:1px;background:#bdbdbd"></div>
<div style="left:571px;top:201.1px;width:0px;height:0px;border-left:3px solid transparent;border-right:3px solid transparent;border-top:3px solid #7d7d7d"></div>
<div style="left:0px;top:229px;width:976px;height:1px;background:#d2d2d2"></div>
<div class="btn" style="left:778px;top:244px;width:54px;height:27px;"><span class="bt" style="transform:scaleX(.83)">CRÉER</span></div>
<div class="btn" style="left:853px;top:244px;width:71px;height:27px;"><span class="bt" style="transform:scaleX(.87)">ANNULER</span></div>
<svg style="left:792px;top:297.6px;" width="12.4" height="11.4" viewBox="0 0 12.400 11.400"><path d="M1 10.600L11.400 .800M7.600 10.800L11.400 7" stroke="#3d3d3d" stroke-width="1.300" fill="none"/></svg>
<div class="ul" style="left:0px;top:311px;width:805px;height:1px;"></div>
<div style="left:940px;top:295px;width:1px;height:30px;background:#e6e6e6"></div>
<div style="left:0px;top:0px;width:960px;height:318.6px;border:5px solid #fff200"></div>
</div>
</body></html>
